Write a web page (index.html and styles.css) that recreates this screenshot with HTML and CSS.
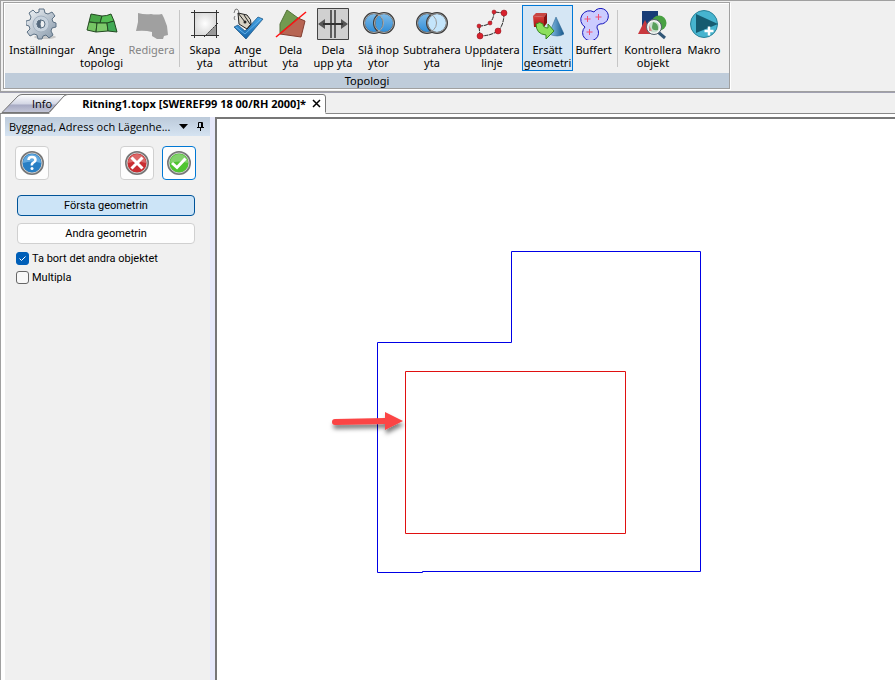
FILE: index.html
```html
<!DOCTYPE html>
<html lang="sv">
<head>
<meta charset="utf-8">
<title>Ritning1.topx</title>
<link rel="stylesheet" href="styles.css">
</head>
<body>
<div class="app">
  <header class="ribbon-bar">
    <section class="ribbon">
      <div class="tools">
        <button class="tool">
          <svg width="32" height="32" viewBox="0 0 32 32"><defs><linearGradient id="steel" x1="0" y1="0" x2="1" y2="1"><stop offset="0" stop-color="#f2f5f8"/><stop offset="1" stop-color="#8496a8"/></linearGradient></defs><ellipse cx="19" cy="29" rx="11" ry="2" fill="#c8c8c8"/><g stroke="#5d7184" fill="url(#steel)"><path d="M13 1h5l1 4 3 1 4-2 3 4-3 3 1 3 3 1v4l-4 1-1 3 2 4-4 3-3-3-3 1-1 3h-4l-1-4-3-1-4 2-3-4 3-3-1-3-3-1v-4l4-1 1-3-2-4 4-3 3 3 3-1z"/><circle cx="15" cy="16" r="8" fill="#c7d2dd" stroke="#a3b1c0"/><circle cx="15" cy="16" r="4" fill="#eef0f2"/><path d="M15 12a4 4 0 0 0 0 8q-2-4 0-8z" fill="#53677b"/></g></svg>
          <span>Inställningar</span>
        </button>
        <button class="tool">
          <svg width="32" height="32" viewBox="0 0 32 32"><g stroke="#234a22" stroke-linejoin="round"><path d="M5 6l11 2-2 7-11-1z" fill="#48a548"/><path d="M16 8q5 0 9-2l3 7q-6 3-14 2z" fill="#54bd54"/><path d="M3 14l8 1-1 9-9-2z" fill="#75c564"/><path d="M11 15h10l1 8-12 1z" fill="#7dca6b"/><path d="M21 15l7-2 3 11-9-1z" fill="#40a955"/></g></svg>
          <span>Ange topologi</span>
        </button>
        <button class="tool" disabled>
          <svg width="32" height="32" viewBox="0 0 32 32"><path d="M2 5q7 2 13 1 5 1 11 0l2 4 3 8 1 9-4 1-1 3h-6l-5-3v-4q-7-2-16-1l2-9z" fill="#a0a0a0"/></svg>
          <span>Redigera</span>
        </button>
        <i class="sep"></i>
        <button class="tool">
          <svg width="32" height="32" viewBox="0 0 32 32"><defs><radialGradient id="page"><stop offset="0" stop-color="#fff"/><stop offset="1" stop-color="#dcdcdc"/></radialGradient></defs><path d="M5 4h22v13L17 27H5z" fill="url(#page)"/><path d="M17 27l10-10v10z" fill="#999"/><path d="M2 4.500h28M5.500 2v28M27.500 2v28M2 27.500h28" stroke="#333" fill="none"/><path d="M15 29L29 15" stroke="#333" stroke-dasharray="2 1"/></svg>
          <span>Skapa yta</span>
        </button>
        <button class="tool">
          <svg width="32" height="32" viewBox="0 0 32 32"><defs><linearGradient id="tick" x1="0" y1="0" x2="0" y2="1"><stop offset="0" stop-color="#48a6e6"/><stop offset="1" stop-color="#1664a8"/></linearGradient></defs><path d="M2 19l4-2 7 6L26 9l5 2-17 20z" fill="url(#tick)" stroke="#154d7c" stroke-width=".7"/><path d="M4 19l9 7L29 11" fill="none" stroke="#7cc3f6" stroke-width=".7"/><path d="M6 5l9 2q5 5 4 9l-4 5-8-5z" fill="#d6d1c4" stroke="#222"/><path d="M6 5l7 9M12 7l6 9M15 21l4-5" stroke="#222"/><circle cx="13" cy="14" r="1.500" fill="#222"/><path d="M2 5q1-5 3-4t2 5M3 8q-2 2 0 4" fill="none" stroke="#444" stroke-width=".7"/></svg>
          <span>Ange attribut</span>
        </button>
        <button class="tool">
          <svg width="32" height="32" viewBox="0 0 32 32"><path d="M12 2l11 8L5 25V16z" fill="#729a50" stroke="#527237"/><path d="M23 10l7 3-4 16-21-3z" fill="#b76553" stroke="#833e31"/><path d="M1 29L31 4" stroke="#f11" stroke-width="1.500"/></svg>
          <span>Dela yta</span>
        </button>
        <button class="tool">
          <svg width="32" height="32" viewBox="0 0 32 32"><path d="M.5.5h31v31H.5z" fill="#d0d0d0" stroke="#444"/><path d="M13 2h2v28h-2zM17 2h2v28h-2z" fill="#5c5c5c"/><path d="M1 16l7-5v4h16v-4l7 5-7 5v-4H8v4z" fill="#555"/><path d="M6 16h20" stroke="#111"/></svg>
          <span>Dela upp&nbsp;yta</span>
        </button>
        <button class="tool">
          <svg width="32" height="32" viewBox="0 0 32 32"><defs><linearGradient id="disc" x1="0" y1="0" x2="0" y2="1"><stop offset="0" stop-color="#84bee9"/><stop offset="1" stop-color="#2c8bd7"/></linearGradient></defs><g fill="url(#disc)" stroke="#3c3c3c" stroke-width="2"><circle cx="11" cy="15" r="10"/><circle cx="21" cy="15" r="10"/></g><path d="M16 7a10 10 0 0 0 0 16a10 10 0 0 0 0-16z" fill="#439cdf" stroke="#666"/><g fill="none" stroke="#aaa"><circle cx="11" cy="15" r="9.500"/><circle cx="21" cy="15" r="9.500"/></g></svg>
          <span>Slå&nbsp;ihop ytor</span>
        </button>
        <button class="tool">
          <svg width="32" height="32" viewBox="0 0 32 32"><circle cx="11" cy="15" r="10" fill="url(#disc)" stroke="#3c3c3c" stroke-width="2"/><circle cx="21" cy="15" r="10" fill="#c4e5fb" stroke="#3c3c3c" stroke-width="2"/><g fill="none" stroke="#999"><circle cx="11" cy="15" r="9.500"/><circle cx="21" cy="15" r="9.500"/></g></svg>
          <span>Subtrahera yta</span>
        </button>
        <button class="tool">
          <svg width="32" height="32" viewBox="0 0 32 32"><path d="M28 5q0 12-6 18-8 5-18 5l-1-10q7 0 11-3 4-5 4-11z" fill="none" stroke="#999" stroke-width=".5"/><path d="M28 5q0 12-6 18-8 5-18 5M4 28L3 18q7 0 11-3 4-5 4-11l10 1" fill="none" stroke="#333" stroke-dasharray="4 1"/><g fill="#d8212d" stroke="#8d101a" stroke-width=".5"><circle cx="28" cy="5" r="3"/><circle cx="22" cy="23" r="3"/><circle cx="4" cy="28" r="3"/><circle cx="3" cy="18" r="2"/><circle cx="14" cy="15" r="2"/><circle cx="18" cy="4" r="2"/></g></svg>
          <span>Uppdatera linje</span>
        </button>
        <button class="tool active" aria-pressed="true">
          <svg width="32" height="32" viewBox="0 0 32 32"><defs><linearGradient id="cone"><stop offset="0" stop-color="#92c8f0"/><stop offset="1" stop-color="#15578b"/></linearGradient><linearGradient id="cube" x1="0" y1="0" x2="0" y2="1"><stop offset="0" stop-color="#d8453f"/><stop offset="1" stop-color="#a80c10"/></linearGradient></defs><path d="M1 8l11 1v10H2z" fill="url(#cube)"/><path d="M1 8l3-3h11l-3 4z" fill="#c94643"/><path d="M12 9l3-4v10l-3 4z" fill="#861214"/><path d="M24 9l8 17q-6 4-15 0z" fill="url(#cone)" stroke="#265c88" stroke-width=".5"/><path d="M4 16q4-3 7 0 0 4 5 4v-4l6 7-8 8v-4q-10-1-10-11z" fill="#8cdf5c" stroke="#38851f"/></svg>
          <span>Ersätt geometri</span>
        </button>
        <button class="tool">
          <svg width="32" height="32" viewBox="0 0 32 32"><path d="M16 4A7.800 7.800 0 1 1 22 16q-4 1-3 4a8 8 0 1 1-12-1A7.800 7.800 0 1 1 16 4z" fill="#ccccff" stroke="#1717bd"/><path d="M9.500 8v6M6.500 11h6M20.500 6v6M17.500 9h6M11.500 21v6M8.500 24h6" stroke="#f14e72"/></svg>
          <span>Buffert</span>
        </button>
        <i class="sep"></i>
        <button class="tool">
          <svg width="32" height="32" viewBox="0 0 32 32"><path d="M5 3h16v17H5z" fill="#173c76"/><circle cx="22" cy="15" r="7.500" fill="#49a143"/><path d="M8 12l7 14H1z" fill="#c9383e"/><path d="M21 24l7 6" stroke="#315777" stroke-width="3"/><circle cx="17" cy="19" r="6.500" fill="#c8dfd0" stroke="#f5f5f5" stroke-width="2"/><circle cx="17" cy="19" r="7.500" fill="none" stroke="#52606a"/><path d="M16 14q6 1 5 8-6 1-6-3z" fill="#58a05c"/><path d="M12 17l3 6h-3z" fill="#d98a8a"/></svg>
          <span>Kontrollera objekt</span>
        </button>
        <button class="tool">
          <svg width="32" height="32" viewBox="0 0 32 32"><circle cx="16" cy="16" r="13.500" fill="#46b4cf" stroke="#288299"/><path d="M8 6l22 10L8 25z" fill="#155b70"/><path d="M21 18.500v9M16.500 23h9" stroke="#fff" stroke-width="2.500"/></svg>
          <span>Makro</span>
        </button>
      </div>
      <h2 class="group-name">Topologi</h2>
    </section>
  </header>

  <nav class="tabs">
    <svg class="tab-shapes" width="326" height="20" viewBox="0 0 326 20"><defs><linearGradient id="tabfill" x1="0" y1="0" x2="0" y2="1"><stop offset="0" stop-color="#fff"/><stop offset=".5" stop-color="#d5d8e6"/><stop offset=".6" stop-color="#a8abc4"/><stop offset="1" stop-color="#c4c7d8"/></linearGradient></defs><path d="M2 18.500L18 2q2-1.500 4-1.500h45L49 18.500z" fill="url(#tabfill)" stroke="#777"/><path d="M49 20L64 2q2-1.500 4-1.500h255q2.500 0 2.500 2.500V20z" fill="#fff"/><path d="M49 18.500L64 2q2-1.500 4-1.500h255q2.500 0 2.500 2.500v15.500" fill="none" stroke="#777"/></svg>
    <a class="tab" href="#info">Info</a>
    <a class="tab current" href="#ritning">Ritning1.topx [SWEREF99 18 00/RH 2000]*</a>
    <button class="close" aria-label="Stäng"><svg width="9" height="9" viewBox="0 0 9 9"><path d="M1 1l7 7M8 1L1 8" stroke="#000" stroke-width="1.500"/></svg></button>
  </nav>

  <main class="workspace">
    <aside class="panel">
      <div class="panel-title">
        <h1>Byggnad, Adress och Lägenhe...</h1>
        <button aria-label="Meny"><svg width="9" height="5" viewBox="0 0 9 5"><path d="M0 0h9L4.500 5z"/></svg></button>
        <button aria-label="Fäst"><svg width="7" height="9" viewBox="0 0 7 9"><path d="M1.500 5V.5h4V5M4.500 0v5M0 5.500h7M3.500 6v3" fill="none" stroke="#000"/></svg></button>
      </div>
      <div class="panel-body">
        <div class="actions">
          <button class="action" aria-label="Hjälp"><svg width="26" height="26" viewBox="0 0 26 26"><circle cx="13" cy="13" r="11" fill="#287fc4" stroke="#777" stroke-width="2"/><circle cx="13" cy="13" r="10" fill="none" stroke="#ccc"/><path d="M4 13a9 9 0 0 1 18 0q-9-3-18 0z" fill="#62a9df"/><path d="M9.500 10q0-3 3.500-3t3.500 3q0 1.500-2 2.500t-1.500 3" fill="none" stroke="#fff" stroke-width="2.500"/><circle cx="13" cy="18.500" r="1.500" fill="#fff"/></svg></button>
          <button class="action" aria-label="Avbryt"><svg width="26" height="26" viewBox="0 0 26 26"><circle cx="13" cy="13" r="11" fill="#c92e32" stroke="#777" stroke-width="2"/><circle cx="13" cy="13" r="10" fill="none" stroke="#ccc"/><path d="M4 13a9 9 0 0 1 18 0q-9-3-18 0z" fill="#dc6868"/><path d="M7.500 7.500l11 11M18.500 7.500l-11 11" stroke="#fff" stroke-width="3"/></svg></button>
          <button class="action default" aria-label="OK"><svg width="26" height="26" viewBox="0 0 26 26"><circle cx="13" cy="13" r="11" fill="#4fc531" stroke="#777" stroke-width="2"/><circle cx="13" cy="13" r="10" fill="none" stroke="#ccc"/><path d="M4 13a9 9 0 0 1 18 0q-9-3-18 0z" fill="#83d16d"/><path d="M6 13l5 4.500 8.500-9" fill="none" stroke="#fff" stroke-width="3"/></svg></button>
        </div>
        <div class="choices">
          <button class="choice selected">Första geometrin</button>
          <button class="choice">Andra geometrin</button>
        </div>
        <label class="check"><input type="checkbox" checked><svg class="mark" width="13" height="13" viewBox="0 0 13 13"><path d="M3.500 6.500l2 2 4-4" fill="none" stroke="#fff"/></svg>Ta bort det andra objektet</label>
        <label class="check"><input type="checkbox">Multipla</label>
      </div>
    </aside>
    <section class="canvas">
      <svg class="drawing" width="380" height="330" viewBox="328 247 380 330"><defs><filter id="shadow" x="-20%" y="-50%" width="140%" height="250%"><feDropShadow dx="1" dy="4" stdDeviation="2" flood-opacity=".5"/></filter></defs><path d="M377.500 342.500h134v-91h189v320h-278v1h-45z" fill="none" stroke="#0000e6"/><path d="M405.500 371.500h220v162h-220z" fill="none" stroke="#e01010"/><path d="M335 419l50-1v-6l18 9-18 9v-6l-50 1a3 3 0 0 1 0-6z" fill="#fb4444" filter="url(#shadow)"/></svg>
    </section>
  </main>
</div>
</body>
</html>
```
FILE: styles.css
```css
* { box-sizing: border-box; }
body { margin: 0; background: #f0f0f0; color: #000; font: 11px/13px "Noto Sans", "Open Sans", sans-serif; }
button { margin: 0; padding: 0; border: 0; background: none; color: inherit; font: inherit; }
h1, h2 { margin: 0; font: inherit; }
svg { display: block; flex: none; }
.app { display: flex; flex-direction: column; min-height: 100vh; }
.ribbon-bar { display: flex; padding: 1px 0 2px 3px; border-top: 1px solid #a0a0a0; border-bottom: 1px solid #a0a0a0; box-shadow: inset 1px 0 #a0a0a0; }
.ribbon { padding: 1px 0 0 1px; border: 1px solid #a0a0a0; box-shadow: inset 1px 1px #fff, 1px 1px #fff; }
.tools { display: grid; grid-template-columns: 68px 51px 49px 8px 42px 44px 41px 44px 47px 60px 60px 51px 41px 8px 62px 40px; height: 69px; padding: 1px 5px 2px 3px; }
.tool { display: flex; flex-direction: column; align-items: center; gap: 3px; padding-top: 2px; border: 1px solid transparent; }
.tool span { width: min-content; margin: 0 -4px; text-align: center; }
.tool:disabled { color: #848484; }
.tool.active { border-color: #0078d7; background: #d5e6f4; }
.sep { width: 1px; height: 57px; margin: 5px 0 0 3px; background: #c6c6c6; }
.group-name { height: 15px; background: #bfccda; line-height: 15px; text-align: center; }
.tabs { position: relative; display: flex; align-items: center; height: 20px; margin-top: 2px; border-bottom: 1px solid #888; box-shadow: 0 -1px #f0f0f0, 0 -2px #a0a0b0; font-family: "Open Sans", "Noto Sans", sans-serif; }
.tab-shapes { position: absolute; left: 0; top: 0; }
.tab { position: relative; margin-left: 32px; color: #000; text-decoration: none; }
.tab.current { margin-left: 30px; font-weight: bold; }
.close { position: relative; margin-left: 6px; }
.workspace { display: flex; flex: 1; padding: 3px 0 0 4px; border-left: 1px solid #a0a0a0; background: #fff; }
.panel { width: 210px; flex: none; border-right: 5px solid #e6e8fa; background: #f0f0f0; }
.panel-title { display: flex; align-items: center; gap: 9px; height: 19px; padding: 0 6px 0 4px; background: linear-gradient(#bccada, #d5e3f1); font-family: "Open Sans", "Noto Sans", sans-serif; }
.panel-title h1 { flex: 1; white-space: nowrap; }
.panel-body { display: flex; flex-direction: column; padding: 10px 14px 0 10px; font-family: Roboto, "Liberation Sans", sans-serif; }
.actions { display: flex; gap: 8px; margin-bottom: 15px; }
.action { display: grid; place-items: center; width: 34px; height: 34px; border: 1px solid #d0d0d0; border-radius: 4px; background: #fdfdfd; }
.action:first-child { margin-right: auto; }
.action.default { border-color: #0078d4; }
.choices { display: flex; flex-direction: column; gap: 7px; margin: 0 1px 5px 2px; }
.choice { height: 21px; border: 1px solid #d0d0d0; border-radius: 4px; background: #fdfdfd; }
.choice.selected { border-color: #005499; background: #cce4f7; }
.check { position: relative; display: flex; align-items: center; gap: 3px; height: 19px; padding-left: 1px; }
.check input { appearance: none; width: 13px; height: 13px; margin: 0; border: 1px solid #666; border-radius: 3px; background: #f8f8f8; }
.check input:checked { border-color: #005fb8; background: #005fb8; }
.mark { position: absolute; left: 1px; top: 3px; visibility: hidden; pointer-events: none; }
.check input:checked + .mark { visibility: visible; }
.canvas { flex: 1; border: 2px solid #777; border-width: 2px 0 0 2px; background: #fff; }
.drawing { margin: 128px 0 0 111px; }
```
